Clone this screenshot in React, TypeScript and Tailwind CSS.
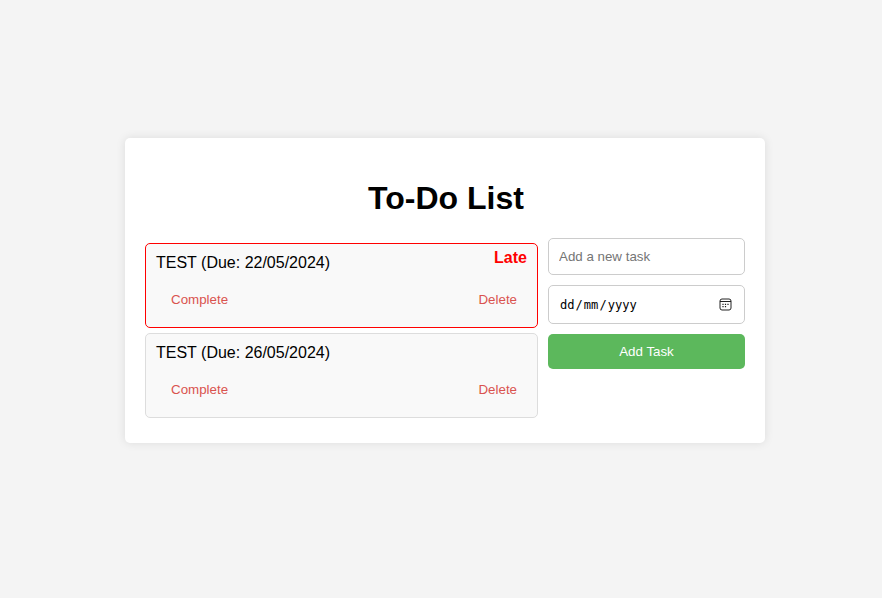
const tasks = [
  { title: 'TEST', due: '22/05/2024', late: true },
  { title: 'TEST', due: '26/05/2024', late: false },
];

function CalendarIcon() {
  return (
    <svg width="13" height="13" viewBox="0 0 13 13" fill="none" stroke="#222" className="shrink-0">
      <rect x="1" y="1" width="11" height="11" rx="2" strokeWidth="1" />
      <path d="M1 3.5H12" strokeWidth="1" />
      <path d="M5.9 6.4h1.2M8.4 6.4h1.2M3.4 8.7h1.2M5.9 8.7h1.2M3.4 6.4h1.2" strokeWidth="1.2" />
    </svg>
  );
}

export default function App() {
  return (
    <div className="flex h-[598px] w-[882px] items-start bg-[#f4f4f4] pl-[125px] pt-[138px] font-['Liberation_Sans',Arial,sans-serif] text-black">
      <main className="h-[305px] w-[640px] rounded-[5px] bg-white px-5 pt-[42px] shadow-[0_0_10px_rgba(0,0,0,0.1)]">
        <h1 className="h-[37px] pl-[2px] text-center text-[32px] font-bold leading-[37px]">To-Do List</h1>
        <div className="mt-[21px] flex items-start gap-[10px]">
          <ul className="mt-[5px] flex w-[393px] flex-col gap-[5px]">
            {tasks.map((task) => (
              <li
                key={task.due}
                className={`h-[85px] rounded-[5px] border bg-[#f9f9f9] px-[10px] pt-[10px] ${task.late ? 'border-[#f00]' : 'border-[#ddd]'}`}
              >
                <div className="flex h-[18px] justify-between text-base leading-[18px]">
                  <span>{task.title} (Due: {task.due})</span>
                  {task.late && <strong className="-mt-[5px] text-[#f00]">Late</strong>}
                </div>
                <div className="mt-[10px] flex justify-between pl-[15px] pr-[10px] text-[13.333px] leading-[35px] text-[#d9534f]">
                  <button>Complete</button>
                  <button>Delete</button>
                </div>
              </li>
            ))}
          </ul>
          <form className="flex w-[197px] flex-col gap-[10px] text-[13.333px]" onSubmit={(e) => e.preventDefault()}>
            <input
              className="h-[37px] rounded-[5px] border border-[#ccc] px-[10px] placeholder:text-[#757575]"
              placeholder="Add a new task"
            />
            <div className="flex h-[39px] items-center justify-between rounded-[5px] border border-[#ccc] pl-[10px] pr-[12px]">
              <div className="flex pt-px font-['DejaVu_Sans_Mono',monospace] text-[12.1px] leading-[15px]">
                <span className="px-px">dd</span>
                <span>/</span>
                <span className="px-px">mm</span>
                <span>/</span>
                <span className="px-px">yyyy</span>
              </div>
              <CalendarIcon />
            </div>
            <button className="h-[35px] rounded-[5px] bg-[#5cb85c] text-white">Add Task</button>
          </form>
        </div>
      </main>
    </div>
  );
}
